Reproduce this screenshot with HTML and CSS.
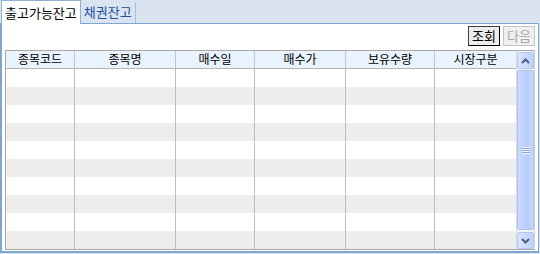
FILE: index.html
```html
<!DOCTYPE html>
<html lang="ko">
<head>
    <meta charset="UTF-8">
    <title>잔고</title>
    <link rel="stylesheet" href="styles.css">
</head>
<body>
    <div class="tabs">
        <div class="tab active">출고가능잔고</div>
        <div class="tab">채권잔고</div>
    </div>
    <div class="panel">
        <div class="toolbar">
            <button class="btn">조회</button>
            <button class="btn" disabled>다음</button>
        </div>
        <div class="grid-wrap">
            <div class="grid">
                <div class="head">종목코드</div>
                <div class="head">종목명</div>
                <div class="head">매수일</div>
                <div class="head">매수가</div>
                <div class="head">보유수량</div>
                <div class="head">시장구분</div>
            </div>
            <div class="rows" id="rows"></div>
            <div class="scroll">
                <div class="arrow">
                    <svg width="9" height="6" viewBox="0 0 9 6"><path d="M1 5 L4.5 1.5 L8 5" fill="none" stroke="#4d6185" stroke-width="2"/></svg>
                </div>
                <div class="thumb">
                    <span class="grip"></span>
                </div>
                <div class="arrow">
                    <svg width="9" height="6" viewBox="0 0 9 6"><path d="M1 1 L4.5 4.5 L8 1" fill="none" stroke="#4d6185" stroke-width="2"/></svg>
                </div>
            </div>
        </div>
    </div>
    <script>
        var rows = document.getElementById("rows");
        for (var i = 0; i < 10; i++) {
            var r = document.createElement("div");
            r.className = i % 2 ? "row odd" : "row";
            for (var j = 0; j < 6; j++) {
                r.appendChild(document.createElement("div"));
            }
            rows.appendChild(r);
        }
    </script>
</body>
</html>
```

FILE: styles.css
```css
body {
    margin: 0;
    width: 540px;
    height: 254px;
    background: #d9e4f0;
    font-family: "Noto Sans CJK KR", "DejaVu Sans", sans-serif;
    font-size: 12px;
    overflow: hidden;
}
.tabs {
    display: flex;
    height: 23px;
    padding-left: 1px;
    align-items: flex-end;
}
.tab {
    height: 21px;
    line-height: 20px;
    padding: 0 3px;
    font-size: 13px;
    color: #1f4f9e;
    border-right: 1px solid #a9bfd6;
}
.tab.active {
    height: 23px;
    line-height: 24px;
    background: #fff;
    color: #000;
    border: 1px solid #8fb0d0;
    border-bottom: none;
    margin-bottom: -1px;
    position: relative;
    z-index: 1;
}
.panel {
    height: 227px;
    background: #fff;
    border: 1px solid #7ea5cb;
    border-left-width: 2px;
    border-bottom-width: 2px;
    width: 536px;
}
.toolbar {
    display: flex;
    justify-content: flex-end;
    gap: 3px;
    padding: 2px 3px 0 0;
    height: 24px;
}
.btn {
    width: 32px;
    height: 20px;
    padding: 0;
    font-family: inherit;
    font-size: 13px;
    line-height: 18px;
    background: #ececec;
    border: 1px solid #404040;
    border-right-color: #000;
    border-bottom-color: #000;
    color: #000;
}
.btn:disabled {
    color: #a8a8a8;
    border-color: #c4c4c4;
    background: #f0f0f0;
}
.grid-wrap {
    position: relative;
    margin-left: 3px;
    width: 528px;
    height: 198px;
    border: 1px solid #a8a8a8;
    border-right-color: #d0d0d0;
}
.grid, .row {
    display: grid;
    grid-template-columns: 69px 101px 79px 91px 89px 82px;
}
.head {
    height: 17px;
    line-height: 16px;
    text-align: center;
    background: #e8f3fe;
    border-right: 1px solid #c4c4c4;
    border-bottom: 1px solid #b4b4b4;
}
.row {
    height: 18px;
    background: #fff;
}
.row.odd {
    background: #ededed;
}
.row div {
    border-right: 1px solid #bdbdbd;
}
.scroll {
    position: absolute;
    top: 0;
    right: 0;
    width: 17px;
    height: 198px;
    display: flex;
    flex-direction: column;
    background: #eef3fd;
    border-left: 1px solid #d6dde8;
}
.arrow {
    height: 15px;
    margin: 1px 0 0 0;
    display: flex;
    align-items: center;
    justify-content: center;
    background: linear-gradient(to right, #d8e4fd, #c0d2fb);
    border: 1px solid #b5c7ee;
    border-radius: 2px;
}
.thumb {
    flex: 1;
    margin: 1px 0;
    background: linear-gradient(to right, #cbdafd, #b8cbf9 60%, #c7d6fc);
    border: 1px solid #adc2f2;
    border-radius: 2px;
    display: flex;
    align-items: center;
    justify-content: center;
}
.grip {
    width: 8px;
    height: 7px;
    background: repeating-linear-gradient(to bottom, #f4f7ff 0, #f4f7ff 1px, #8ea8e6 1px, #8ea8e6 2px);
}
```
